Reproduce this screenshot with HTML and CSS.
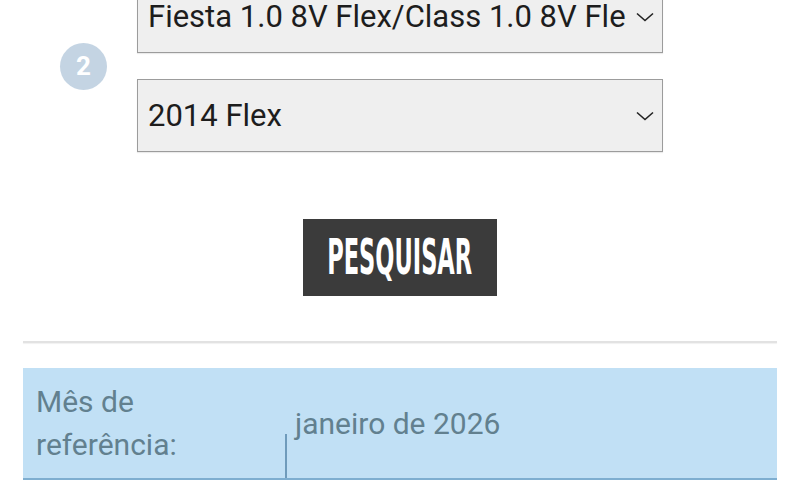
FILE: index.html
```html
<!DOCTYPE html>
<html lang="pt-BR">
<head>
<meta charset="utf-8">
<title>Pesquisa</title>
<link rel="stylesheet" href="styles.css">
</head>
<body>
<main class="page">
  <section class="step">
    <div class="step-badge">2</div>
    <div class="selects">
      <div class="select">
        <span class="select-text">Fiesta 1.0 8V Flex/Class 1.0 8V Flex</span>
        <svg class="chev" viewBox="0 0 18 10" width="18" height="10"><path d="M1 1.5 L9 8.5 L17 1.5" fill="none" stroke="#222" stroke-width="1.6"/></svg>
      </div>
      <div class="select">
        <span class="select-text">2014 Flex</span>
        <svg class="chev" viewBox="0 0 18 10" width="18" height="10"><path d="M1 1.5 L9 8.5 L17 1.5" fill="none" stroke="#222" stroke-width="1.6"/></svg>
      </div>
    </div>
  </section>
  <div class="actions">
    <button class="btn" type="button"><span class="btn-label">PESQUISAR</span></button>
  </div>
  <hr class="divider">
  <section class="result">
    <div class="cell-label">Mês de<br>referência:</div>
    <div class="cell-value">
      <div class="value-text">janeiro de 2026</div>
      <div class="cell-rule"></div>
    </div>
  </section>
</main>
</body>
</html>
```
FILE: styles.css
```css
html, body {
  margin: 0;
  padding: 0;
  background: #ffffff;
  overflow: hidden;
}
body {
  font-family: Roboto, "Liberation Sans", sans-serif;
}
.page {
  width: 800px;
  margin-top: -20px;
}
.step {
  display: flex;
  align-items: center;
  padding-left: 60px;
  gap: 30px;
}
.step-badge {
  width: 47px;
  height: 47px;
  border-radius: 50%;
  background: #c4d4e3;
  color: #ffffff;
  font-weight: 700;
  font-size: 26px;
  display: flex;
  align-items: center;
  justify-content: center;
  flex: none;
}
.selects {
  display: flex;
  flex-direction: column;
  gap: 26px;
}
.select {
  width: 526px;
  height: 73px;
  box-sizing: border-box;
  border: 1px solid #9c9c9c;
  background: #efefef;
  display: flex;
  align-items: center;
  padding: 0 8px 0 10px;
  box-shadow: 0 1px 1px rgba(0,0,0,0.08);
}
.select-text {
  flex: 1;
  white-space: nowrap;
  overflow: hidden;
  font-size: 31px;
  color: #1d1d1d;
  margin-right: 10px;
}
.chev {
  flex: none;
}
.actions {
  display: flex;
  justify-content: center;
  margin-top: 67px;
}
.btn {
  width: 194px;
  height: 77px;
  border: none;
  background: #3b3b3b;
  color: #ffffff;
  padding: 0;
  display: flex;
  align-items: center;
  justify-content: center;
  overflow: hidden;
}
.btn-label {
  display: inline-block;
  font-family: "DejaVu Sans", sans-serif;
  font-weight: 700;
  font-size: 49px;
  transform: scaleX(0.46);
  white-space: nowrap;
}
.divider {
  margin: 45px 23px 0 23px;
  border: none;
  height: 2px;
  background: #e2e2e2;
  box-shadow: 0 1px 1px rgba(0,0,0,0.06);
}
.result {
  margin: 25px 23px 0 23px;
  height: 110px;
  background: #c1e0f5;
  border-bottom: 2px solid #7eaed0;
  display: flex;
  color: #62808f;
  font-size: 30px;
}
.cell-label {
  width: 249px;
  padding: 12px 0 0 13px;
  line-height: 43px;
  flex: none;
}
.cell-value {
  flex: 1;
  display: flex;
  flex-direction: column;
}
.value-text {
  padding: 40px 0 0 10px;
  line-height: 32px;
  height: 26px;
}
.cell-rule {
  flex: 1;
  border-left: 2px solid #6f9bbb;
}
```
